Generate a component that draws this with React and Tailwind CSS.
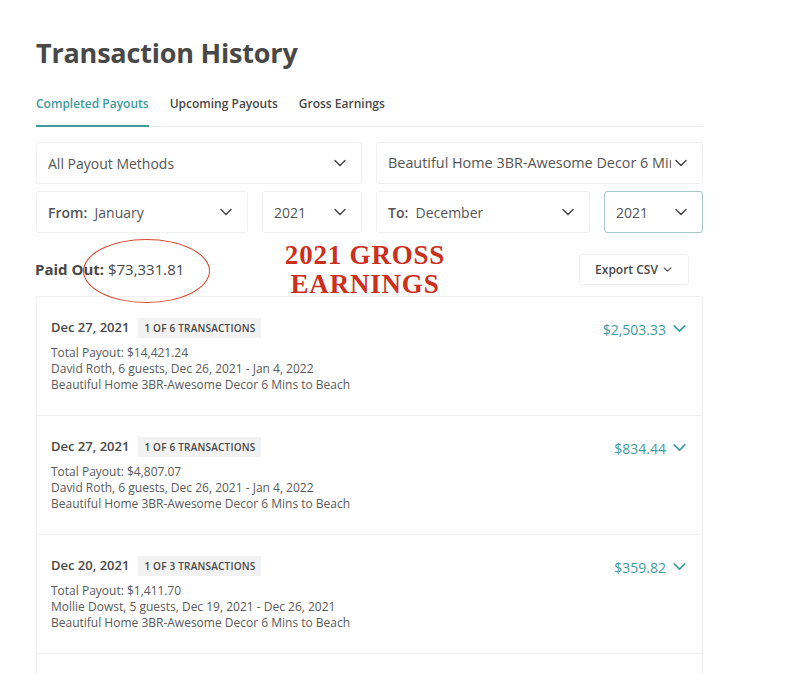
import React from 'react';

const font = { fontFamily: '"Open Sans", "Liberation Sans", sans-serif' };

const transactions = [
  {
    date: 'Dec 27, 2021',
    badge: '1 of 6 transactions',
    total: 'Total Payout: $14,421.24',
    guest: 'David Roth, 6 guests, Dec 26, 2021 - Jan 4, 2022',
    listing: 'Beautiful Home 3BR-Awesome Decor 6 Mins to Beach',
    amount: '$2,503.33',
  },
  {
    date: 'Dec 27, 2021',
    badge: '1 of 6 transactions',
    total: 'Total Payout: $4,807.07',
    guest: 'David Roth, 6 guests, Dec 26, 2021 - Jan 4, 2022',
    listing: 'Beautiful Home 3BR-Awesome Decor 6 Mins to Beach',
    amount: '$834.44',
  },
  {
    date: 'Dec 20, 2021',
    badge: '1 of 3 transactions',
    total: 'Total Payout: $1,411.70',
    guest: 'Mollie Dowst, 5 guests, Dec 19, 2021 - Dec 26, 2021',
    listing: 'Beautiful Home 3BR-Awesome Decor 6 Mins to Beach',
    amount: '$359.82',
  },
];

const Chevron = ({ className = 'w-4 h-4', color = '#484848' }) => (
  <svg viewBox="0 0 16 16" className={className} fill="none" stroke={color} strokeWidth="1.5" strokeLinecap="round" strokeLinejoin="round">
    <path d="M3 5.5l5 5 5-5" />
  </svg>
);

const Select = ({ children, className = '', focused = false }) => (
  <div
    className={`h-[42px] flex items-center justify-between pl-[11px] pr-[13px] rounded-[3px] border ${
      focused ? 'border-[#a9c9cb]' : 'border-[#f1f1f1]'
    } text-[14px] text-[#555] ${className}`}
  >
    <div className="overflow-hidden whitespace-nowrap">{children}</div>
    <Chevron className="w-[16px] h-[16px] shrink-0 ml-[2px]" />
  </div>
);

export default function App() {
  return (
    <div className="w-[800px] h-[674px] overflow-hidden bg-white text-[#484848]" style={font}>
      <div className="w-[667px] ml-[36px] pt-[33px]">
        <h1 className="text-[27px] font-bold leading-[40px] text-[#484848] tracking-[-0.2px]">Transaction History</h1>

        {/* tabs */}
        <div className="mt-[22px] flex border-b border-[#ebebeb] text-[12px] font-semibold">
          <div className="pb-[12px] border-b-2 border-[#3e9b9c] text-[#3e9b9c] -mb-px">Completed Payouts</div>
          <div className="ml-[21px] pb-[12px] text-[#484848]">Upcoming Payouts</div>
          <div className="ml-[21px] pb-[12px] text-[#484848]">Gross Earnings</div>
        </div>

        {/* filters */}
        <div className="mt-[15px] flex gap-[14px]">
          <Select className="w-[326px]">All Payout Methods</Select>
          <Select className="w-[327px] pr-[12px]">
            <span className="text-[14.4px]">Beautiful Home 3BR-Awesome Decor 6 Mins to Beach</span>
          </Select>
        </div>
        <div className="mt-[7px] flex gap-[14px]">
          <Select className="w-[212px]">
            <span className="font-semibold">From:</span>&nbsp;&nbsp;January
          </Select>
          <Select className="w-[100px]">2021</Select>
          <Select className="w-[214px]">
            <span className="font-semibold">To:</span>&nbsp;&nbsp;December
          </Select>
          <Select className="w-[99px]" focused>2021</Select>
        </div>

        {/* paid out + annotation */}
        <div className="relative mt-[21px] h-[31px] flex items-center justify-between">
          <div className="text-[15px] text-[#484848] -ml-[1px]">
            <span className="font-bold">Paid Out:</span> $73,331.81
          </div>
          <div className="h-[31px] w-[110px] mr-[14px] rounded-[3px] border border-[#f0f0f0] flex items-center justify-center text-[12px] font-semibold text-[#484848]">
            Export CSV
            <Chevron className="w-[11px] h-[11px] ml-[4px]" />
          </div>
          <div className="absolute left-[47px] -top-[15px] w-[127px] h-[64px] rounded-[50%] border-[1.5px] border-[#d9452b]" />
          <div
            className="absolute left-[229px] -top-[13px] w-[200px] text-center text-[27px] font-bold leading-[29px] tracking-[0.8px] text-[#cc2f1c]"
            style={{ fontFamily: '"Liberation Serif", serif' }}
          >
            2021 GROSS
            <br />
            EARNINGS
          </div>
        </div>

        {/* list */}
        <div className="mt-[11px] border border-[#f0f0f0] rounded-[3px]">
          {transactions.map((t, i) => (
            <div key={i} className="h-[119px] border-b border-[#f0f0f0] pl-[14px] pr-[14px] pt-[21px] flex justify-between">
              <div>
                <div className="flex items-center">
                  <span className="text-[13px] font-semibold text-[#484848]">{t.date}</span>
                  <span className="ml-[9px] h-[20px] px-[6px] bg-[#f2f2f2] text-[10px] tracking-[0.2px] font-semibold uppercase text-[#484848] flex items-center">
                    {t.badge}
                  </span>
                </div>
                <div className="mt-[7px] text-[12px] leading-[16px] text-[#5a5a5a]">
                  <div>{t.total}</div>
                  <div>{t.guest}</div>
                  <div>{t.listing}</div>
                </div>
              </div>
              <div className="flex items-start pt-[1px]">
                <span className="text-[14px] text-[#3e9b9c]">{t.amount}</span>
                <Chevron className="w-[17px] h-[17px] ml-[5px] mt-[1px]" color="#3e9b9c" />
              </div>
            </div>
          ))}
          <div className="h-[40px]" />
        </div>
      </div>
    </div>
  );
}
